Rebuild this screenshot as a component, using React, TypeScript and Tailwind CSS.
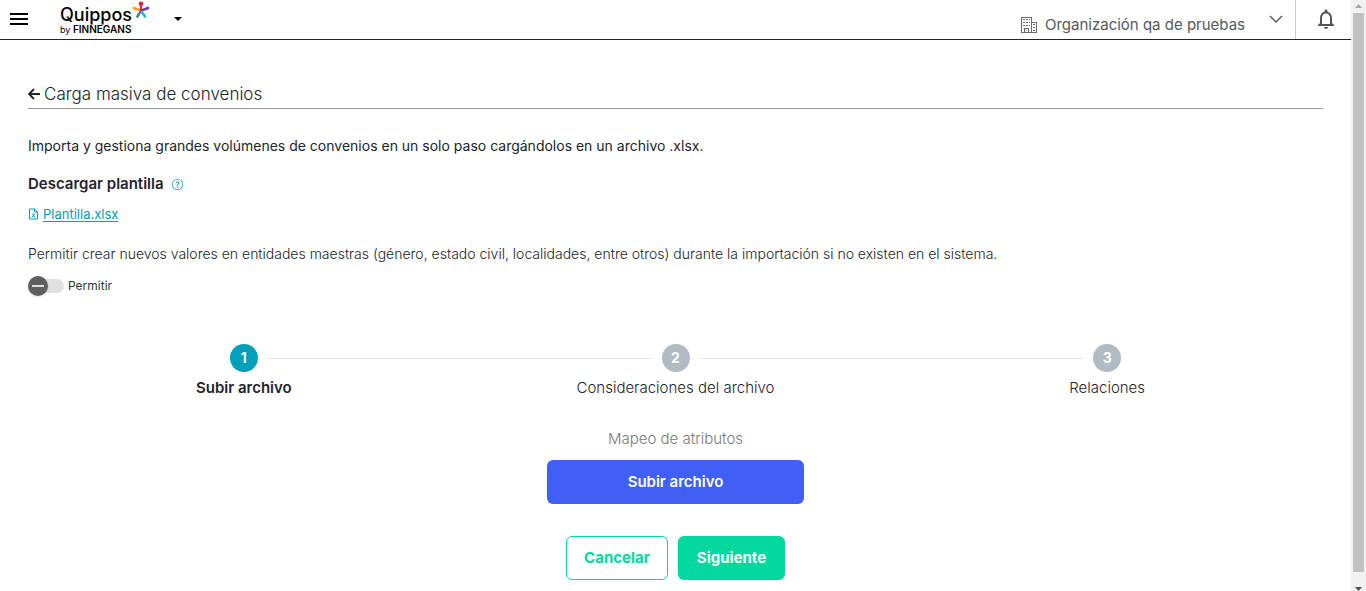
import { useState } from 'react'
import { BsQuestionCircle } from 'react-icons/bs'
import { MdNotificationsNone } from 'react-icons/md'
import clsx from 'clsx'

const steps = [
  { number: 1, label: 'Subir archivo' },
  { number: 2, label: 'Consideraciones del archivo' },
  { number: 3, label: 'Relaciones' },
]

function LogoMark() {
  return (
    <svg viewBox="0 0 18 18" className="size-[18px]" fill="none" strokeLinecap="round">
      <path d="M9 9.5 3 7.5" stroke="#f9a01b" strokeWidth="2.4" />
      <path d="m9 9.5 6-2" stroke="#6b3fa0" strokeWidth="2.4" />
      <path d="m8.5 10.5-3 5" stroke="#8a4fb0" strokeWidth="2.4" />
      <path d="m6.5 13.5-1 2" stroke="#2f9e44" strokeWidth="2.4" />
      <path d="m9.5 10.5 3.5 5" stroke="#12b5cb" strokeWidth="2.4" />
      <path d="M9 9V5" stroke="#f0163e" strokeWidth="2" />
      <circle cx="9" cy="2.8" r="2.3" fill="#f0163e" />
      <circle cx="2.2" cy="7" r="1.6" fill="#f9a01b" />
      <circle cx="15.8" cy="7" r="1.6" fill="#5b45c0" />
    </svg>
  )
}

function BuildingIcon() {
  return (
    <svg
      viewBox="0 0 16 16"
      className="h-4 w-4"
      fill="none"
      stroke="#6a6d70"
      shapeRendering="crispEdges"
    >
      <path d="M.5 15.5V.5h10v15zM10.5 5.5h5v10h-5" />
      <path d="M3.5 15.5v-4h4v4" />
      <path d="M2 2.5h2M5 2.5h2M8 2.5h1M2 5.5h2M5 5.5h2M8 5.5h1M2 8.5h2M5 8.5h2M8 8.5h1" />
      <path d="M12 7.5h2M12 10.5h2M12 13.5h2" />
    </svg>
  )
}

function ExcelIcon() {
  return (
    <svg viewBox="0 0 11 12" className="h-3 w-[11px]" fill="none" stroke="currentColor">
      <path d="M1.5 1h5.2L9.5 3.8V11h-8z" strokeLinejoin="round" />
      <path d="M6.5 1v3h3" />
      <path d="m4 5.5 3 4M7 5.5l-3 4" />
    </svg>
  )
}

function Header() {
  return (
    <header className="flex h-10 shrink-0 items-stretch justify-between border-b border-[#212529]">
      <div className="flex items-center pb-0.5 pl-2.5">
        <button type="button" aria-label="Menú" className="flex w-[18px] flex-col gap-[3px]">
          <span className="h-0.5 bg-black" />
          <span className="h-0.5 bg-black" />
          <span className="h-0.5 bg-black" />
        </button>
        <a href="#" className="ml-8 flex items-start text-black">
          <span className="flex flex-col pt-1.5">
            <span className="text-lg leading-4 font-medium">Quippos</span>
            <span className="text-[9px] leading-3">
              by <span className="text-[10px] font-semibold">FINNEGANS</span>
            </span>
          </span>
          <LogoMark />
        </a>
        <button type="button" aria-label="Cambiar aplicación" className="ml-6">
          <svg viewBox="0 0 8 4" className="h-1 w-2">
            <path d="M0 0h8L4 4z" />
          </svg>
        </button>
      </div>
      <div className="flex items-stretch">
        <button type="button" className="flex items-center pr-3 pb-0.5 text-[#54595e]">
          <span className="flex items-center gap-2 pt-3">
            <BuildingIcon />
            <span className="text-[15px] leading-5">Organización qa de pruebas</span>
          </span>
          <svg
            viewBox="0 0 14 8"
            className="ml-6 h-2 w-3.5"
            fill="none"
            stroke="currentColor"
            strokeWidth="1.4"
          >
            <path d="m1 1 6 6 6-6" />
          </svg>
        </button>
        <button
          type="button"
          aria-label="Notificaciones"
          className="flex w-14 items-center border-l border-[#ccc] pb-0.5 pl-[18px] text-[#555]"
        >
          <MdNotificationsNone size={24} />
        </button>
      </div>
    </header>
  )
}

function Stepper() {
  return (
    <ol className="mt-12 grid grid-cols-3">
      {steps.map(({ number, label }, i) => (
        <li key={number} className="flex flex-col items-center">
          <div className="flex w-full items-center gap-2.5">
            <span className={clsx('h-px flex-1', i > 0 && 'bg-[#e0e0e8]')} />
            <span
              className={clsx(
                'flex size-7 items-center justify-center rounded-full text-sm font-bold text-white',
                i === 0 ? 'bg-[#00a0ba]' : 'bg-[#b0bbc4]',
              )}
            >
              {number}
            </span>
            <span
              className={clsx('h-px flex-1', i < steps.length - 1 && 'bg-[#e0e0e8]')}
            />
          </div>
          <span
            className={clsx(
              'mt-1.5 text-[15px] leading-5',
              i === 0 ? 'font-semibold' : 'font-light',
            )}
          >
            {label}
          </span>
        </li>
      ))}
    </ol>
  )
}

function Scrollbar() {
  return (
    <div aria-hidden="true" className="flex w-[15px] shrink-0 flex-col items-center bg-[#f1f1f1]">
      <svg viewBox="0 0 15 13" className="h-[13px] w-[15px]" fill="#a3a3a3">
        <path d="M4 8h7L7.5 4z" />
      </svg>
      <div className="w-[11px] flex-1 bg-[#c1c1c1]" />
      <svg viewBox="0 0 15 19" className="h-[19px] w-[15px]" fill="#505050">
        <path d="M4 15h7l-3.5 4z" />
      </svg>
    </div>
  )
}

export default function App() {
  const [allowed, setAllowed] = useState(false)

  return (
    <div className="flex h-screen overflow-hidden bg-white font-['Inter',sans-serif] text-[#212529]">
      <div className="flex min-w-0 flex-1 flex-col">
        <Header />
        <main className="flex-1 px-7 pt-11">
          <h1 className="flex items-center gap-1 border-b border-[#999] pb-1 text-[17px] leading-5 font-light">
            <a href="#" aria-label="Volver">
              <svg
                viewBox="0 0 12 12"
                className="size-3"
                fill="none"
                stroke="currentColor"
                strokeWidth="1.8"
              >
                <path d="M12 6H1M6 1 1 6l5 5" />
              </svg>
            </a>
            Carga masiva de convenios
          </h1>
          <p className="mt-[27px] text-sm leading-5">
            Importa y gestiona grandes volúmenes de convenios en un solo paso cargándolos en un
            archivo .xlsx.
          </p>
          <h2 className="mt-4 flex items-center gap-2 text-[15px] leading-6 font-semibold text-[#1f2433]">
            Descargar plantilla
            <BsQuestionCircle size={11} className="text-[#00a0ba]" />
          </h2>
          <a
            href="#"
            className="mt-2 flex w-fit items-center gap-1 text-[13px] leading-5 text-[#00a0ba]"
          >
            <ExcelIcon />
            <span className="underline underline-offset-2">Plantilla.xlsx</span>
          </a>
          <p className="mt-5 text-sm leading-5 font-light">
            Permitir crear nuevos valores en entidades maestras (género, estado civil, localidades,
            entre otros) durante la importación si no existen en el sistema.
          </p>
          <label className="mt-3 flex w-fit items-center gap-1 text-xs leading-5 text-[#333]">
            <input
              type="checkbox"
              checked={allowed}
              onChange={(e) => setAllowed(e.target.checked)}
              className="peer sr-only"
            />
            <span className="flex h-3.5 w-9 items-center rounded-full bg-[#e0e0e0] peer-checked:justify-end">
              <span className="flex size-5 items-center justify-center rounded-full bg-[#5f5f5f] shadow">
                <span className="h-0.5 w-3 bg-[#e0e0e0]" />
              </span>
            </span>
            Permitir
          </label>
          <Stepper />
          <div className="mt-[31px] flex flex-col items-center">
            <p className="text-[15px] leading-5 font-light text-[#7a7a7a]">Mapeo de atributos</p>
            <button
              type="button"
              className="mt-[11px] h-11 w-[257px] rounded-md bg-[#3f5ff5] text-[15px] font-semibold text-white"
            >
              Subir archivo
            </button>
            <div className="mt-8 flex gap-2.5 text-[15px] font-bold">
              <button
                type="button"
                className="h-11 w-[102px] rounded-md border border-[#00d89d] text-[#00d89d]"
              >
                Cancelar
              </button>
              <button type="button" className="h-11 w-[107px] rounded-md bg-[#00d89d] text-white">
                Siguiente
              </button>
            </div>
          </div>
        </main>
      </div>
      <Scrollbar />
    </div>
  )
}
